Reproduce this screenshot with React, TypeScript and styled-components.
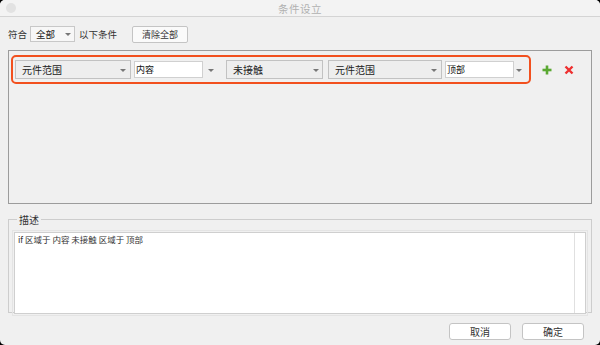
import React from "react";
import styled, { createGlobalStyle } from "styled-components";

const Global = createGlobalStyle`
  html, body { margin: 0; padding: 0; background: #000; }
  body { font-family: "Noto Sans CJK SC", "Noto Sans", sans-serif; }
`;

const Window = styled.div`
  width: 600px;
  height: 345px;
  background: #f0f0f0;
  border-radius: 5px;
  overflow: hidden;
  display: flex;
  flex-direction: column;
  color: #222;
  font-size: 9.5px;
`;

const TitleBar = styled.div`
  height: 16px;
  border-bottom: 1px solid #d4d4d4;
  background: #f3f3f3;
  display: flex;
  align-items: center;
  justify-content: center;
  position: relative;
  flex-shrink: 0;
`;

const TitleText = styled.span`
  color: #b0b0b0;
  font-size: 10.5px;
  letter-spacing: 0.5px;
`;

const Traffic = styled.span`
  position: absolute;
  left: 6px;
  top: 3px;
  width: 10px;
  height: 10px;
  border-radius: 50%;
  background: #e2e2e2;
`;

const Body = styled.div`
  flex: 1;
  padding: 8px 8px 0 8px;
  display: flex;
  flex-direction: column;
`;

const TopRow = styled.div`
  display: flex;
  align-items: center;
  height: 18px;
`;

const Label = styled.span<{ $ml?: number }>`
  margin-left: ${(p) => p.$ml ?? 0}px;
  font-size: 9.5px;
  color: #333;
`;

const SmallSelect = styled.div`
  margin-left: 3px;
  width: 45px;
  height: 16px;
  box-sizing: border-box;
  border: 1px solid #c8c8c8;
  background: #f7f7f7;
  display: flex;
  align-items: center;
  padding-left: 5px;
  position: relative;
  font-size: 9.5px;
`;

const Caret = styled.span<{ $right?: number }>`
  position: absolute;
  right: ${(p) => p.$right ?? 4}px;
  top: 50%;
  margin-top: -1px;
  width: 0;
  height: 0;
  border-left: 3px solid transparent;
  border-right: 3px solid transparent;
  border-top: 3px solid #777;
`;

const PushButton = styled.div<{ $w: number }>`
  width: ${(p) => p.$w}px;
  height: 17px;
  box-sizing: border-box;
  border: 1px solid #c4c4c4;
  border-radius: 2px;
  background: #fafafa;
  display: flex;
  align-items: center;
  justify-content: center;
  font-size: 9px;
  color: #333;
`;

const ClearBtn = styled(PushButton)`
  margin-left: 15px;
`;

const RulesPanel = styled.div`
  margin-top: 7px;
  height: 154px;
  box-sizing: border-box;
  border: 1px solid #9c9c9c;
  background: #f0f0f0;
  padding: 4px 2px;
`;

const RuleRow = styled.div`
  display: flex;
  align-items: center;
`;

const Highlight = styled.div`
  width: 520px;
  height: 29px;
  box-sizing: border-box;
  border: 2px solid #f2501e;
  border-radius: 5px;
  display: flex;
  align-items: center;
  padding-left: 2px;
`;

const Combo = styled.div<{ $w: number; $ml?: number }>`
  width: ${(p) => p.$w}px;
  margin-left: ${(p) => p.$ml ?? 0}px;
  height: 19px;
  box-sizing: border-box;
  border: 1px solid #c2c2c2;
  background: #eeeeee;
  display: flex;
  align-items: center;
  padding-left: 6px;
  position: relative;
  font-size: 10px;
  color: #222;
`;

const Editable = styled.div<{ $ml?: number; $w: number }>`
  display: flex;
  align-items: center;
  margin-left: ${(p) => p.$ml ?? 0}px;
  position: relative;
  width: ${(p) => p.$w}px;
  height: 19px;
`;

const TextInput = styled.div`
  width: 69px;
  height: 17px;
  box-sizing: border-box;
  border: 1px solid #d0d0d0;
  background: #fff;
  font-size: 9px;
  display: flex;
  align-items: flex-end;
  padding: 0 0 1px 1px;
  color: #111;
`;

const IconBtn = styled.span<{ $ml: number }>`
  margin-left: ${(p) => p.$ml}px;
  display: flex;
  align-items: center;
`;

const DescFieldset = styled.fieldset`
  margin: 8px 0 0 0;
  padding: 5px;
  height: 101px;
  box-sizing: border-box;
  border: 1px solid #cdcdcd;
  display: flex;
`;

const Legend = styled.legend`
  padding: 0 2px;
  margin-left: 3px;
  font-size: 10px;
  color: #333;
`;

const DescBox = styled.div`
  flex: 1;
  height: 82px;
  box-sizing: border-box;
  border: 1px solid #cfcfcf;
  outline: 1px solid #e4e4e4;
  outline-offset: 1px;
  background: #fff;
  display: flex;
`;

const DescText = styled.div`
  flex: 1;
  padding: 0 3px;
  font-size: 8.5px;
  color: #333;
`;

const ScrollTrack = styled.div`
  width: 10px;
  border-left: 1px solid #e0e0e0;
`;

const Footer = styled.div`
  display: flex;
  justify-content: flex-end;
  gap: 11px;
  padding: 10px 8px 0 0;
`;

const FootBtn = styled(PushButton)`
  border-radius: 3px;
  background: #fff;
  font-size: 10px;
`;

const Plus = () => (
  <svg width="10" height="10" viewBox="0 0 10 10">
    <rect x="3.7" y="0.5" width="2.6" height="9" fill="#5aa832" />
    <rect x="0.5" y="3.7" width="9" height="2.6" fill="#5aa832" />
  </svg>
);

const Cross = () => (
  <svg width="10" height="10" viewBox="0 0 10 10">
    <path d="M1.5 1.5 L8.5 8.5 M8.5 1.5 L1.5 8.5" stroke="#ee3030" strokeWidth="2.4" />
  </svg>
);

export default function App() {
  return (
    <>
      <Global />
      <Window>
        <TitleBar>
          <Traffic />
          <TitleText>条件设立</TitleText>
        </TitleBar>
        <Body>
          <TopRow>
            <Label>符合</Label>
            <SmallSelect>
              全部
              <Caret $right={3} />
            </SmallSelect>
            <Label $ml={4}>以下条件</Label>
            <ClearBtn $w={56}>清除全部</ClearBtn>
          </TopRow>
          <RulesPanel>
            <RuleRow>
              <Highlight>
                <Combo $w={116}>
                  元件范围
                  <Caret $right={4} />
                </Combo>
                <Editable $ml={3} $w={92}>
                  <TextInput>内容</TextInput>
                  <Caret $right={12} />
                </Editable>
                <Combo $w={97}>
                  未接触
                  <Caret $right={3} />
                </Combo>
                <Combo $w={114} $ml={5}>
                  元件范围
                  <Caret $right={4} />
                </Combo>
                <Editable $ml={3} $w={80}>
                  <TextInput>顶部</TextInput>
                  <Caret $right={3} />
                </Editable>
              </Highlight>
              <IconBtn $ml={11}>
                <Plus />
              </IconBtn>
              <IconBtn $ml={12}>
                <Cross />
              </IconBtn>
            </RuleRow>
          </RulesPanel>
          <DescFieldset>
            <Legend>描述</Legend>
            <DescBox>
              <DescText>if 区域于 内容 未接触 区域于 顶部</DescText>
              <ScrollTrack />
            </DescBox>
          </DescFieldset>
          <Footer>
            <FootBtn $w={62}>取消</FootBtn>
            <FootBtn $w={62}>确定</FootBtn>
          </Footer>
        </Body>
      </Window>
    </>
  );
}
